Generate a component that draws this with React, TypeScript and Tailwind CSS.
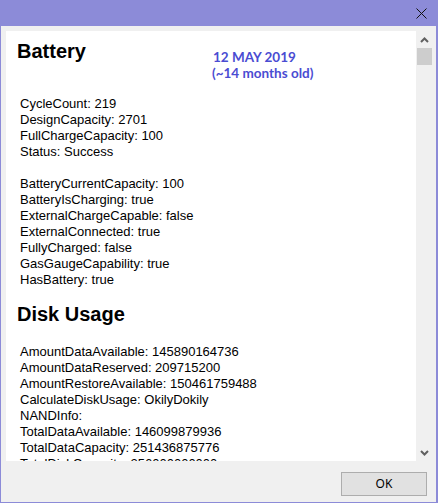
import React from "react";

const battery = [
  ["CycleCount: 219", "DesignCapacity: 2701", "FullChargeCapacity: 100", "Status: Success"],
  [
    "BatteryCurrentCapacity: 100",
    "BatteryIsCharging: true",
    "ExternalChargeCapable: false",
    "ExternalConnected: true",
    "FullyCharged: false",
    "GasGaugeCapability: true",
    "HasBattery: true",
  ],
];

const disk = [
  "AmountDataAvailable: 145890164736",
  "AmountDataReserved: 209715200",
  "AmountRestoreAvailable: 150461759488",
  "CalculateDiskUsage: OkilyDokily",
  "NANDInfo:",
  "TotalDataAvailable: 146099879936",
  "TotalDataCapacity: 251436875776",
  "TotalDiskCapacity: 256000000000",
];

function Lines({ items }: { items: string[] }) {
  return (
    <div className="pl-[3px] text-[13px] leading-[16px] text-black">
      {items.map((t) => (
        <div key={t} className="whitespace-nowrap">
          {t}
        </div>
      ))}
    </div>
  );
}

export default function App() {
  return (
    <div
      className="w-[438px] h-[503px] flex flex-col bg-[#f0f0f0] border-l border-r-2 border-b border-[#8c8bd8] overflow-hidden"
      style={{ fontFamily: '"Liberation Sans", Arial, sans-serif' }}
    >
      {/* title bar */}
      <div className="h-[26px] shrink-0 bg-[#8c8bd8] flex items-center justify-end pr-[9px]">
        <svg width="11" height="11" viewBox="0 0 11 11">
          <path d="M0.5 0.5 L10.5 10.5 M10.5 0.5 L0.5 10.5" stroke="#111" strokeWidth="1" />
        </svg>
      </div>

      {/* content + scrollbar */}
      <div className="mt-[5px] ml-[5px] flex h-[430px] shrink-0">
        <div className="w-[410px] h-full bg-white overflow-hidden pt-[8px] pl-[11px]">
          <div className="flex items-start">
            <h2 className="text-[20px] leading-[24px] font-bold w-[195px]">Battery</h2>
            <div
              className="mt-[10px] text-[13.5px] leading-[16px] font-bold text-[#4a4cd2]"
              style={{ fontFamily: "Lato, sans-serif" }}
            >
              <div className="pl-[1px]">12 MAY 2019</div>
              <div>(~14 months old)</div>
            </div>
          </div>

          <div className="mt-[15px] flex flex-col gap-[16px]">
            {battery.map((g, i) => (
              <Lines key={i} items={g} />
            ))}
          </div>

          <h2 className="mt-[14px] text-[20px] leading-[24px] font-bold">Disk Usage</h2>
          <div className="mt-[18px]">
            <Lines items={disk} />
          </div>
        </div>

        {/* scrollbar */}
        <div className="w-[17px] h-full flex flex-col items-center">
          <div className="h-[17px] w-full flex items-center justify-center">
            <svg width="9" height="6" viewBox="0 0 9 6">
              <path d="M1 5 L4.5 1.5 L8 5" stroke="#606060" strokeWidth="2" fill="none" />
            </svg>
          </div>
          <div className="w-[15px] h-[17px] bg-[#cdcdcd]" />
          <div className="flex-1" />
          <div className="h-[17px] w-full flex items-center justify-center">
            <svg width="9" height="6" viewBox="0 0 9 6">
              <path d="M1 1 L4.5 4.5 L8 1" stroke="#606060" strokeWidth="2" fill="none" />
            </svg>
          </div>
        </div>
      </div>

      {/* footer */}
      <div className="flex justify-end pr-[9px] mt-[11px]">
        <button
          className="w-[86px] h-[24px] bg-[#e1e1e1] border border-[#adadad] text-[12px] text-black"
          style={{ fontFamily: '"Noto Sans", sans-serif' }}
        >
          OK
        </button>
      </div>
    </div>
  );
}
